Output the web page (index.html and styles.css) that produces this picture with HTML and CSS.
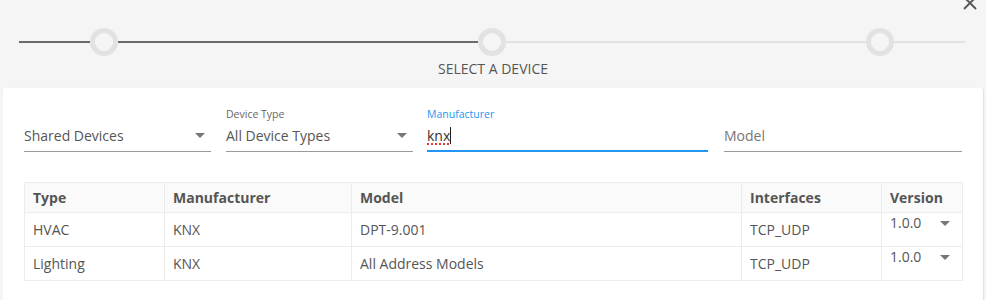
FILE: index.html
```html
<!DOCTYPE html>
<html lang="en">
<head>
    <meta charset="UTF-8">
    <title>Select a Device</title>
    <link rel="stylesheet" href="styles.css">
</head>
<body>

<div class="dialog">
    <!-- Close button -->
    <div class="close">
        <svg width="16" height="16" viewBox="0 0 16 16"><path d="M2 2 L14 14 M14 2 L2 14" stroke="#5a5a5a" stroke-width="2" fill="none"/></svg>
    </div>

    <!-- Stepper -->
    <div class="stepper">
        <div class="seg seg-short done"></div>
        <div class="step"></div>
        <div class="seg seg-long done"></div>
        <div class="step"></div>
        <div class="seg seg-long"></div>
        <div class="step"></div>
        <div class="seg seg-short"></div>
    </div>
    <div class="step-title">SELECT A DEVICE</div>

    <!-- Card -->
    <div class="card">
        <div class="filters">
            <div class="field f-shared">
                <div class="label"></div>
                <div class="control select">
                    <span class="value">Shared Devices</span>
                    <span class="arrow"></span>
                </div>
            </div>
            <div class="field f-type">
                <div class="label">Device Type</div>
                <div class="control select">
                    <span class="value">All Device Types</span>
                    <span class="arrow"></span>
                </div>
            </div>
            <div class="field f-manu focused">
                <div class="label">Manufacturer</div>
                <div class="control">
                    <span class="value typed">knx</span><span class="caret"></span>
                </div>
            </div>
            <div class="field f-model">
                <div class="label"></div>
                <div class="control">
                    <span class="value placeholder">Model</span>
                </div>
            </div>
        </div>

        <table class="devices">
            <thead>
                <tr>
                    <th class="c-type">Type</th>
                    <th class="c-manu">Manufacturer</th>
                    <th class="c-model">Model</th>
                    <th class="c-if">Interfaces</th>
                    <th class="c-ver">Version</th>
                </tr>
            </thead>
            <tbody>
                <tr>
                    <td>HVAC</td>
                    <td>KNX</td>
                    <td>DPT-9.001</td>
                    <td>TCP_UDP</td>
                    <td class="ver"><div class="ver-select"><span>1.0.0</span><span class="arrow"></span></div></td>
                </tr>
                <tr>
                    <td>Lighting</td>
                    <td>KNX</td>
                    <td>All Address Models</td>
                    <td>TCP_UDP</td>
                    <td class="ver"><div class="ver-select"><span>1.0.0</span><span class="arrow"></span></div></td>
                </tr>
            </tbody>
        </table>
    </div>
</div>

</body>
</html>
```

FILE: styles.css
```css
:root {
    --bg-color: #f5f5f5;
    --text-color: #555;
    --line-dark: #6a6a6a;
    --line-light: #e2e2e2;
    --border-color: #ececec;
    --accent: #2196f3;
}

body {
    margin: 0;
    padding: 0;
    background-color: var(--bg-color);
    font-family: "Open Sans", "Noto Sans", sans-serif;
    color: var(--text-color);
    overflow: hidden;
}

.dialog {
    position: relative;
    height: 300px;
}

.close {
    position: absolute;
    top: -6px;
    right: 8px;
    width: 16px;
    height: 16px;
}

/* Stepper */
.stepper {
    display: flex;
    align-items: center;
    padding: 28px 0 0 19px;
}

.seg {
    height: 2px;
    background-color: var(--line-light);
}

.seg.done {
    background-color: var(--line-dark);
}

.seg-short {
    width: 71px;
}

.seg-long {
    width: 360px;
}

.step {
    width: 18px;
    height: 18px;
    border: 5px solid var(--line-light);
    border-radius: 50%;
    background-color: var(--bg-color);
}

.step-title {
    text-align: center;
    font-size: 14px;
    line-height: 18px;
    margin-top: 4px;
    color: #555;
}

/* Card */
.card {
    margin: 10px 0 0 3px;
    width: 980px;
    height: 220px;
    background-color: #fff;
    border-radius: 3px;
    box-shadow: 1px 0 1px rgba(0, 0, 0, 0.08);
    padding: 19px 21px 0 21px;
    box-sizing: border-box;
}

.filters {
    display: flex;
}

.field {
    display: flex;
    flex-direction: column;
    margin-right: 15px;
}

.f-shared { width: 187px; }
.f-type { width: 187px; margin-right: 14px; }
.f-manu { width: 281px; margin-right: 16px; }
.f-model { width: 238px; margin-right: 0; }

.label {
    font-size: 10.5px;
    line-height: 15px;
    height: 15px;
    color: #666;
}

.control {
    display: flex;
    align-items: center;
    height: 30px;
    padding-bottom: 3px;
    box-sizing: border-box;
    border-bottom: 1px solid #9a9a9a;
    font-size: 14px;
    color: #555;
}

.select .value {
    flex-grow: 1;
}

.focused .label {
    color: var(--accent);
}

.focused .control {
    border-bottom: 2px solid var(--accent);
    padding-bottom: 2px;
}

.typed {
    color: #333;
    text-decoration: underline dotted #e53935;
    text-decoration-thickness: 2px;
    text-underline-offset: 3px;
}

.caret {
    width: 1px;
    height: 17px;
    background-color: #222;
}

.placeholder {
    color: #777;
}

.arrow {
    width: 0;
    height: 0;
    border-left: 5px solid transparent;
    border-right: 5px solid transparent;
    border-top: 5px solid #777;
    margin-right: 6px;
}

/* Table */
.devices {
    margin-top: 30px;
    width: 938px;
    table-layout: fixed;
    border-collapse: collapse;
    font-size: 14px;
    color: #555;
}

.devices th,
.devices td {
    box-sizing: border-box;
    border: 1px solid var(--border-color);
    text-align: left;
    padding: 0 8px;
}

.devices th {
    height: 30px;
    font-weight: 700;
    background-color: #fafafa;
}

.devices td {
    height: 34px;
}

.c-type { width: 140px; }
.c-manu { width: 187px; }
.c-model { width: 390px; }
.c-if { width: 140px; }
.c-ver { width: 81px; }

.devices td.ver {
    vertical-align: top;
    padding-top: 1px;
}

.ver-select {
    display: flex;
    align-items: center;
    justify-content: space-between;
    font-size: 14px;
    line-height: 18px;
}

.ver-select .arrow {
    margin-right: 4px;
}
```
